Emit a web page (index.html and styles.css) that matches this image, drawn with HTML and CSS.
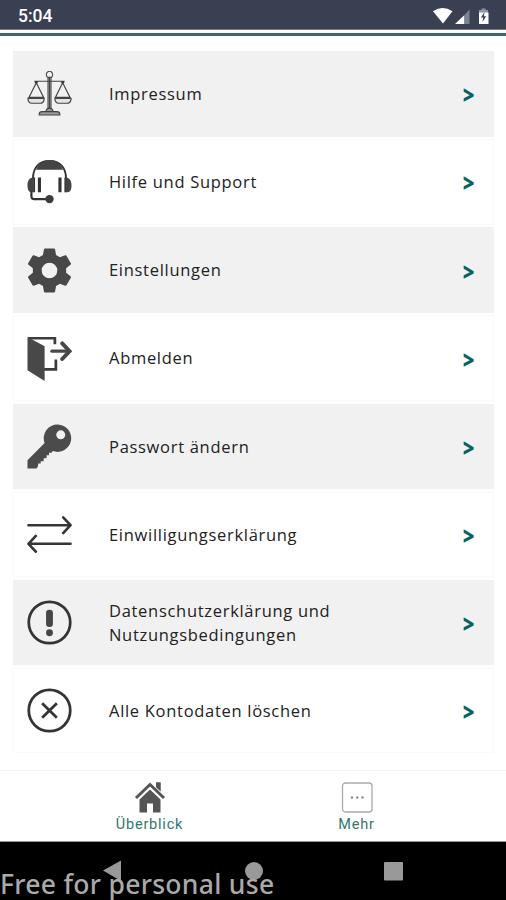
FILE: index.html
```html
<!DOCTYPE html>
<html lang="de">
<head>
<meta charset="utf-8">
<meta name="viewport" content="width=device-width">
<title>Mehr</title>
<link rel="stylesheet" href="styles.css">
</head>
<body>
<div class="screen">
  <header class="status">
    <span class="time">5:04</span>
    <svg class="status-icons" width="60" height="20" viewBox="0 0 60 20">
      <path fill="#fff" d="M1 4.200Q10.500-2 20.500 4.200L11 16.500Z"/>
      <path fill="#fff" d="M23 17L32.500 8V17Z"/>
      <path fill="#7b8290" d="M32.500 8L37.500 2.500V17H32.500Z"/>
      <path fill="#8e95a3" d="M47 3h2.500V1.500h4V3H56v4H47Z"/>
      <path fill="#fff" d="M47 5.500h9.500v11.500H47Z"/>
      <path fill="#384052" d="M52.500 5l-3.600 5.500h2.300L50.500 15l3.700-5.700h-2.300Z"/>
    </svg>
  </header>
  <div class="accent"></div>
  <main class="list">
    <a class="row shaded">
      <svg class="icon" viewBox="0 0 46 46" fill="none" stroke="#444" stroke-width="1.200">
        <path d="M21.500 39V6.500h3V39M7.500 10.500h31M21 6.500a3.200 3.500 0 1 1 4 0M23 7v32"/>
        <path d="M9.500 12L2 27h15ZM36.500 12L29 27h15Z"/>
        <path fill="#e4e4e4" d="M1 28h16.500v1q-.5 4-4 4H5q-4-.5-4-5ZM28.500 28H45v1q-.5 4-4 4h-8.500q-4-.5-4-5Z"/>
        <path fill="#999" d="M19 42q1-4 4-4t4 4M12.500 45v-1q0-2.500 3-2.500h15q3 0 3 2.500v1Z"/>
        <path stroke="#333" stroke-width="2" d="M8 11.500h3M35 11.500h3"/>
      </svg>
      <span class="label">Impressum</span><span class="chevron">&gt;</span>
    </a>
    <a class="row">
      <svg class="icon" viewBox="0 0 46 46">
        <path fill="none" stroke="#333" stroke-width="2" d="M6 21C6 9 12 2 23 2S40 9 40 21"/>
        <path fill="#444" d="M9 11Q14 1 23 1T37 11Z"/>
        <path fill="#444" d="M7 19H5.500C2 20 .5 22.500 .5 27s1.500 6.500 4 7H7ZM39 19h1.500C44 20 45.500 22.500 45.500 27s-1.500 6.500-4 7H39Z"/>
        <path fill="none" stroke="#333" stroke-width="3.200" d="M12.700 19v15M33.700 19v15"/>
        <path fill="none" stroke="#333" stroke-width="1.500" d="M7.500 19v15M39 19v15"/>
        <path fill="none" stroke="#333" stroke-width="2.200" d="M4.500 33v5q0 3 3 3H21"/>
        <circle cx="23" cy="41" r="4.300" fill="#3c3c3c"/>
      </svg>
      <span class="label">Hilfe und Support</span><span class="chevron">&gt;</span>
    </a>
    <a class="row shaded">
      <svg class="icon" viewBox="0 0 46 46">
        <path fill="#484848" fill-rule="evenodd" d="M18.500 .5h9q1 0 1.200 1l1 5.700 4 2.300 5.200-2q1-.4 1.600.6l4.300 7.400q.5 1-.3 1.600L40 20.700v4.600l4.500 3.600q.8.600.3 1.600l-4.300 7.400q-.6 1-1.600.6l-5.200-2-4 2.300-1 5.700q-.2 1-1.200 1h-9q-1 0-1.200-1l-1-5.700-4-2.300-5.200 2q-1 .4-1.600-.6L1.200 30.500q-.5-1 .3-1.600L6 25.300v-4.600l-4.500-3.600q-.8-.6-.3-1.600l4.300-7.400q.6-1 1.600-.6l5.200 2 4-2.300 1-5.700q.2-1 1.200-1ZM23 15a8 8 0 1 0 0 16 8 8 0 0 0 0-16Z"/>
      </svg>
      <span class="label">Einstellungen</span><span class="chevron">&gt;</span>
    </a>
    <a class="row">
      <svg class="icon" viewBox="0 0 46 46">
        <path fill="none" stroke="#3c3c3c" stroke-width="2.800" d="M1 2.300H28.500V8.500M17 34H29.500V24"/>
        <path fill="#484848" d="M.5 1L18 10.500V46L.5 35Z"/>
        <path fill="none" stroke="#484848" stroke-width="3.400" stroke-linecap="round" d="M25.500 15.500H42"/>
        <path fill="none" stroke="#484848" stroke-width="4" stroke-linecap="round" d="M36 7.500l7.500 8-7.500 8"/>
      </svg>
      <span class="label">Abmelden</span><span class="chevron">&gt;</span>
    </a>
    <a class="row shaded">
      <svg class="icon" viewBox="0 0 46 46">
        <path fill="#4b4b4b" fill-rule="evenodd" d="M31.500.5a14 14 0 1 1-5 27.200L25 29.500h-2.500V32H20v3h-3v3h-3v2.500h-2.500L11 44l-1.500 1.500H.5V37L18 19.500A14 14 0 0 1 31.500.5ZM34.500 6.500a4.600 4.600 0 1 0 0 9.200 4.600 4.600 0 0 0 0-9.200Z"/>
      </svg>
      <span class="label">Passwort ändern</span><span class="chevron">&gt;</span>
    </a>
    <a class="row">
      <svg class="icon" viewBox="0 0 46 46" fill="none" stroke="#363636" stroke-width="2.700" stroke-linecap="round" stroke-linejoin="round">
        <path d="M1.500 13.500H44M37 5.500l7.500 8-7.500 8M44.500 32.500H2M9 24.500l-7.500 8 7.500 8"/>
      </svg>
      <span class="label">Einwilligungserklärung</span><span class="chevron">&gt;</span>
    </a>
    <a class="row shaded">
      <svg class="icon" viewBox="0 0 46 46">
        <circle cx="23" cy="23" r="21.200" fill="none" stroke="#343434" stroke-width="2.800"/>
        <rect x="19.500" y="10" width="7" height="17.500" rx="3.300" fill="#464646"/>
        <circle cx="23" cy="33.500" r="3.500" fill="#464646"/>
      </svg>
      <span class="label">Datenschutzerklärung und<br>Nutzungsbedingungen</span><span class="chevron">&gt;</span>
    </a>
    <a class="row">
      <svg class="icon" viewBox="0 0 46 46" fill="none" stroke="#343434" stroke-width="2.800">
        <circle cx="23" cy="23" r="21.200"/>
        <path d="M15.500 15.500l15 15M30.500 15.500l-15 15"/>
      </svg>
      <span class="label">Alle Kontodaten löschen</span><span class="chevron">&gt;</span>
    </a>
  </main>
  <nav class="tabs">
    <a class="tab">
      <svg width="32" height="33" viewBox="0 0 32 33">
        <path fill="#555" d="M22 1.500h4.500V11L22 7Z"/>
        <path fill="none" stroke="#fff" stroke-width="6" d="M2 18L16 4.500 30 18"/>
        <path fill="#555" d="M22.300 1.500h4.200V10L22.300 6Z"/>
        <path fill="#555" d="M5.500 18.500L16 8.500l10.500 10V31.500H19v-9h-6v9H5.500Z"/>
        <path fill="none" stroke="#555" stroke-width="3" d="M2 17L16 3.500 30 17"/>
      </svg>
      <span>Überblick</span>
    </a>
    <a class="tab">
      <svg width="32" height="33" viewBox="0 0 32 33">
        <rect x="1.500" y="2" width="29.500" height="29" rx="3" fill="#fff" stroke="#aaa" stroke-width="1.300"/>
        <g fill="#8c8c8c"><circle cx="11" cy="16.500" r="1.200"/><circle cx="16.200" cy="16.500" r="1.200"/><circle cx="21.500" cy="16.500" r="1.200"/></g>
      </svg>
      <span>Mehr</span>
    </a>
  </nav>
  <footer class="navbar">
    <svg class="keys" width="506" height="58" viewBox="0 0 506 58" fill="#999">
      <path d="M103 28.500L121 18.500V39Z"/>
      <circle cx="254" cy="29" r="9"/>
      <rect x="384" y="20" width="19" height="18.500" rx="1"/>
    </svg>
    <span class="watermark">Free for personal use</span>
  </footer>
</div>
</body>
</html>
```
FILE: styles.css
```css
* {
  box-sizing: border-box;
}

body {
  margin: 0;
  background: #fff;
  font-family: "Open Sans", sans-serif;
}

.screen {
  display: flex;
  flex-direction: column;
  width: 506px;
  height: 900px;
  overflow: hidden;
}

.status {
  display: flex;
  justify-content: space-between;
  align-items: center;
  height: 30px;
  padding: 2px 14px 0 18px;
  background: #384052;
  border-bottom: 1px solid #777b84;
}

.time {
  color: #fff;
  font: 500 17.500px/20px Roboto, sans-serif;
}

.status-icons {
  margin-top: 3px;
}

.accent {
  height: 3px;
  margin-top: 3px;
  background: #3b6970;
}

.list {
  display: grid;
  grid-template-rows: repeat(8, 85.500px);
  gap: 2.640px;
  padding: 15px 12px 0 13px;
  height: 734px;
}

.row {
  display: flex;
  align-items: center;
  padding: 0 18.500px 0 13px;
  border: 1px solid #fafafa;
}

.shaded {
  background: #f1f1f1;
  border-color: #f1f1f1;
}

.icon {
  flex: none;
  width: 45px;
  height: 45px;
}

.label {
  flex: 1;
  margin-left: 37px;
  padding-top: 0.500px;
  color: #222;
  font-size: 16.500px;
  font-weight: 450;
  line-height: 24px;
  letter-spacing: 0.700px;
}

.chevron {
  color: #0c625f;
  font-size: 20px;
  font-weight: 800;
  line-height: 24px;
  margin-top: 5px;
  transform: scaleY(1.200);
}

.tabs {
  display: flex;
  height: 72px;
  padding: 10px 46px 0;
  border-top: 1px solid #f3f3f3;
  border-bottom: 1px solid #999;
}

.tab {
  display: flex;
  flex: 1;
  flex-direction: column;
  gap: 1px;
  align-items: center;
  color: #34766f;
  font: 14.500px/20px Roboto, sans-serif;
  letter-spacing: 0.800px;
}

.navbar {
  position: relative;
  flex: 1;
  background: #000;
}

.keys {
  display: block;
}

.watermark {
  position: absolute;
  left: 0;
  top: 26px;
  color: #aaa;
  font: 500 26.500px/32px "Noto Sans", sans-serif;
  letter-spacing: 0.300px;
  white-space: nowrap;
}
```
